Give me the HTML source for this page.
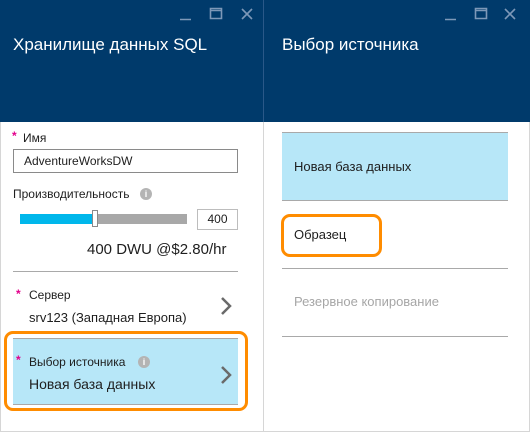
<!DOCTYPE html><html><head><meta charset="utf-8"><style>
*{margin:0;padding:0;box-sizing:border-box}
body{width:530px;height:432px;background:#fff;font-family:"Liberation Sans","DejaVu Sans",sans-serif;position:relative;overflow:hidden;color:#1e1e1e}
.a{position:absolute}
.hdr{background:#003a6b;top:0;height:122px}
.t{color:#fff;font-size:17px;top:35px}
.ic{stroke:#7d98b8;fill:none;stroke-width:1.6}
.lbl{font-size:12px}
.st{color:#e3008c;font-size:12px;font-weight:bold}
.line{height:1px;background:#a9a9a9}
.info{width:12px;height:12px;border-radius:50%;background:#b4b4b4;color:#fff;font-size:9px;font-weight:bold;text-align:center;line-height:12px}
</style></head><body>
<div class="a" style="left:0;top:0;width:530px;height:432px;border:1px solid #d6d6d6"></div>
<div class="a hdr" style="left:0;width:263px"></div>
<div class="a hdr" style="left:264px;width:266px"></div>
<div class="a" style="left:263px;top:0;width:1px;height:432px;background:#d6d6d6"></div>
<div class="a" style="left:263px;top:0;width:1px;height:122px;background:#2a5888"></div>
<svg class="a" style="left:0;top:0" width="530" height="30">
<path class="ic" d="M180 19.5H191M210.5 8.5h11v10h-11zM210.5 10.5h11M242 9l10 10M252 9l-10 10"/>
<path class="ic" d="M445 19.5H456M475.5 8.5h11v10h-11zM475.5 10.5h11M505 9l10 10M515 9l-10 10"/>
</svg>
<div class="a t" style="left:13px">Хранилище данных SQL</div>
<div class="a t" style="left:282px">Выбор источника</div>

<div class="a st" style="left:12px;top:129px">*</div>
<div class="a lbl" style="left:23px;top:131px">Имя</div>
<div class="a" style="left:13px;top:149px;width:225px;height:24px;border:1px solid #8a8a8a;font-size:12px;padding:4px 0 0 10px">AdventureWorksDW</div>
<div class="a lbl" style="left:13px;top:187px">Производительность</div>
<div class="a info" style="left:140px;top:188px">i</div>
<div class="a" style="left:20px;top:214px;width:73px;height:10px;background:#00b7eb"></div>
<div class="a" style="left:97px;top:214px;width:90px;height:10px;background:#a8a8a8"></div>
<div class="a" style="left:92px;top:210px;width:6px;height:17px;background:#fff;border:1px solid #8a8a8a"></div>
<div class="a" style="left:197px;top:209px;width:41px;height:21px;border:1px solid #bdbdbd;font-size:12px;text-align:center;line-height:19px">400</div>
<div class="a" style="left:87px;top:241px;font-size:15px">400 DWU @$2.80/hr</div>
<div class="a line" style="left:13px;top:271px;width:225px"></div>

<div class="a st" style="left:16px;top:287px">*</div>
<div class="a lbl" style="left:29px;top:288px">Сервер</div>
<div class="a" style="left:29px;top:310px;font-size:13px">srv123 (Западная Европа)</div>
<svg class="a" style="left:218px;top:296px" width="16" height="20"><path d="M4 2l8 8-8 8" stroke="#6a6a6a" stroke-width="2.5" fill="none"/></svg>

<div class="a" style="left:13px;top:338px;width:225px;height:67px;background:#b7e7f8;border-top:1px solid #a9a9a9;border-bottom:1px solid #a9a9a9"></div>
<div class="a" style="left:4px;top:331px;width:244px;height:80px;border:3px solid #ff8c00;border-radius:9px"></div>
<div class="a st" style="left:16px;top:353px">*</div>
<div class="a lbl" style="left:29px;top:355px">Выбор источника</div>
<div class="a info" style="left:138px;top:356px">i</div>
<div class="a" style="left:29px;top:376px;font-size:14px">Новая база данных</div>
<svg class="a" style="left:218px;top:365px" width="16" height="20"><path d="M4 2l8 8-8 8" stroke="#6a6a6a" stroke-width="2.5" fill="none"/></svg>

<div class="a" style="left:282px;top:132px;width:226px;height:69px;background:#b7e7f8;border-top:1px solid #a9a9a9;border-bottom:1px solid #a9a9a9"></div>
<div class="a" style="left:294px;top:159px;font-size:13px">Новая база данных</div>
<div class="a" style="left:281px;top:214px;width:101px;height:43px;border:3px solid #ff8c00;border-radius:9px"></div>
<div class="a" style="left:294px;top:227px;font-size:13px">Образец</div>
<div class="a line" style="left:282px;top:268px;width:226px"></div>
<div class="a" style="left:294px;top:294px;font-size:13px;color:#a6a6a6">Резервное копирование</div>
<div class="a line" style="left:282px;top:336px;width:226px"></div>
</body></html>
